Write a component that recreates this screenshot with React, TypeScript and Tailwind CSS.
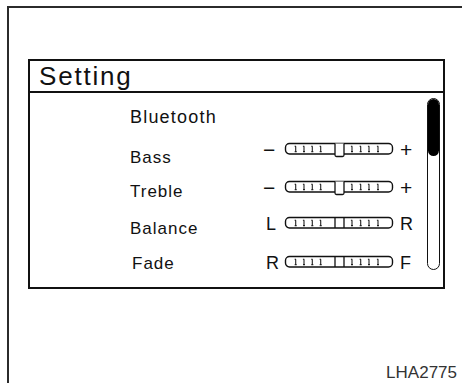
import React from 'react';

const TICKS = [11.7, 20, 28.3, 36.7, 68, 76.7, 85, 94];

// audio level bar: rounded track, 4 ticks each side, centre knob
function Slider({ raised }: { raised?: boolean }) {
  return (
    <svg width={112} height={18} viewBox="0 0 112 18" className="shrink-0">
      <rect x={1.5} y={2.5} width={107} height={10.5} rx={4} fill="#fff" stroke="#111" strokeWidth={1.4} />
      {TICKS.map((x) => (
        <path
          key={x}
          d={`M${x} 5.2 V10.6 M${x - 1.1} 5.2 H${x + 0.3} M${x - 1} 10.6 H${x + 1}`}
          stroke="#222"
          strokeWidth={1.1}
          fill="none"
        />
      ))}
      {raised ? (
        <path d="M51 2.5 V14 Q51 15.5 52.5 15.5 H58.5 Q60 15.5 60 14 V2.5" fill="#fff" stroke="#111" strokeWidth={1.3} />
      ) : (
        <path d="M51 2.5 V13 M60 2.5 V13" stroke="#111" strokeWidth={1.3} />
      )}
    </svg>
  );
}

function Control({ left, right, raised, sign, className }: { left: string; right: string; raised?: boolean; sign?: boolean; className?: string }) {
  const size = sign ? 'text-[21px] leading-[18px]' : 'text-[18px] leading-[18px]';
  return (
    <div className={`flex h-[18px] items-center ${className ?? ''}`}>
      <span className={`w-[18px] text-[#111] ${size} ${sign ? '-ml-[3px] w-[21px]' : ''}`}>{left}</span>
      <Slider raised={raised} />
      <span className={`ml-[4px] text-[#111] ${size}`}>{right}</span>
    </div>
  );
}

export default function App() {
  return (
    <div className="flex h-[383px] w-[462px] flex-col overflow-hidden bg-white pl-[7px] pt-[6px] font-['Liberation_Sans',Arial,sans-serif]">
      <div className="flex flex-1 flex-col border-l-2 border-t-2 border-[#2b2b2b]">
        <section className="ml-[19px] mt-[51px] flex h-[230px] w-[417px] flex-col border-2 border-[#111]">
          <header className="h-[32px] border-b-2 border-[#111] pl-[9px] text-[26px] leading-[30px] tracking-[1.8px] text-[#111]">
            Setting
          </header>
          <div className="flex flex-1">
            <div className="flex w-[236px] flex-col pl-[100px] pt-[12px] text-[17px] leading-[24px] tracking-[1px] text-[#111]">
              <span className="h-[24px] text-[18px] tracking-[1.2px]">Bluetooth</span>
              <span className="mt-[17px] h-[24px]">Bass</span>
              <span className="mt-[10px] h-[24px]">Treble</span>
              <span className="mt-[13px] h-[24px]">Balance</span>
              <span className="ml-[2px] mt-[11px] h-[24px]">Fade</span>
            </div>
            <div className="flex flex-col pt-[48px]">
              <Control left="−" right="+" raised sign />
              <Control left="−" right="+" raised sign className="mt-[20px]" />
              <Control left="L" right="R" className="mt-[18px]" />
              <Control left="R" right="F" className="mt-[21px]" />
            </div>
            <div className="ml-auto mr-[3px] pt-[5px]">
              <div className="h-[172px] w-[13px] overflow-hidden rounded-full border-[1.5px] border-[#111]">
                <div className="h-[57px] rounded-b-full bg-black" />
              </div>
            </div>
          </div>
        </section>
        <p className="mt-[72px] pr-[5px] text-right text-[17px] leading-[24px] text-[#333]">LHA2775</p>
      </div>
    </div>
  );
}
